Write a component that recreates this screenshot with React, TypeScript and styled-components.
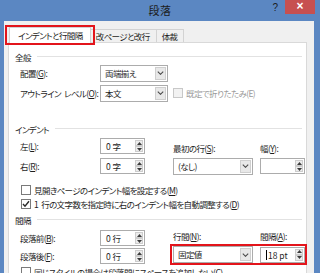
import styled, { createGlobalStyle } from "styled-components";

const GlobalStyle = createGlobalStyle`
  html, body { margin: 0; padding: 0; }
  body {
    width: 320px;
    height: 273px;
    overflow: hidden;
    font-family: "Noto Sans CJK JP", "Noto Sans", sans-serif;
    font-feature-settings: "palt";
    color: #1e1e1e;
  }
`;

function Chevron() {
  return (
    <svg width="7" height="4" viewBox="0 0 7 4">
      <path d="M0.8 0.6 L3.5 3.3 L6.2 0.6" fill="none" stroke="#4a4a4a" strokeWidth="1.1" />
    </svg>
  );
}

function Tri({ up }: { up?: boolean }) {
  return (
    <svg width="5" height="3" viewBox="0 0 5 3">
      <path d={up ? "M0 3 L2.5 0 L5 3 Z" : "M0 0 L2.5 3 L5 0 Z"} fill="#3c3c3c" />
    </svg>
  );
}

function Select({ value, width }: { value: string; width: number }) {
  return (
    <SelectBox $w={width}>
      <SelectText>{value}</SelectText>
      <ArrowBtn>
        <Chevron />
      </ArrowBtn>
    </SelectBox>
  );
}

function Spinner({ value, caret }: { value: string; caret?: boolean }) {
  return (
    <SpinBox>
      <SpinText>
        {caret && <Caret />}
        {value}
      </SpinText>
      <SpinBtns>
        <SpinBtn>
          <Tri up />
        </SpinBtn>
        <SpinBtn>
          <Tri />
        </SpinBtn>
      </SpinBtns>
    </SpinBox>
  );
}

function Check({ checked, disabled, children }: { checked?: boolean; disabled?: boolean; children: React.ReactNode }) {
  return (
    <>
      <Box $disabled={disabled}>
        {checked && (
          <svg width="8" height="8" viewBox="0 0 8 8">
            <path d="M1 4 L3 6.2 L7 1.2" fill="none" stroke="#2a2a2a" strokeWidth="1.4" />
          </svg>
        )}
      </Box>
      <CheckText $disabled={disabled}>{children}</CheckText>
    </>
  );
}

function App() {
  return (
    <>
      <GlobalStyle />
      <Window>
        <TitleBar>
          <span />
          <Title>段落</Title>
          <TitleButtons>
            <Help>?</Help>
            <Close>×</Close>
          </TitleButtons>
        </TitleBar>
        <Body>
          <Tabs>
            <Tab $active>インデントと行間隔</Tab>
            <Tab>改ページと改行</Tab>
            <Tab>体裁</Tab>
          </Tabs>
          <Panel>
            <Heading $top={7}>全般</Heading>
            <Row $h={20}>
              <Label>
                配置(<U>G</U>):
              </Label>
              <Select value="両端揃え" width={68} />
            </Row>
            <Row $h={20}>
              <Label>
                アウトライン<Sp />レベル(<U>O</U>):
              </Label>
              <Select value="本文" width={68} />
              <Gap />
              <Check disabled>既定で折りたたみ(E)</Check>
            </Row>

            <Heading $top={19}>インデント</Heading>
            <Block $top={1}>
              <LeftCol $w={158}>
                <Row $h={20}>
                  <Label>
                    左(<U>L</U>):
                  </Label>
                  <Spinner value="0 字" />
                </Row>
                <Row $h={20}>
                  <Label>
                    右(<U>R</U>):
                  </Label>
                  <Spinner value="0 字" />
                </Row>
              </LeftCol>
              <FieldCol $w={87}>
                <FieldLabel>
                  最初の行(<U>S</U>):
                </FieldLabel>
                <FieldControl>
                  <Select value="(なし)" width={80} />
                </FieldControl>
              </FieldCol>
              <FieldCol $w={43}>
                <FieldLabel>
                  幅(<U>Y</U>):
                </FieldLabel>
                <FieldControl>
                  <Spinner value="" />
                </FieldControl>
              </FieldCol>
            </Block>

            <CheckRow $top={7}>
              <Check>
                見開きページのインデント幅を設定する(<U>M</U>)
              </Check>
            </CheckRow>
            <CheckRow>
              <Check checked>
                1<Sp />行の文字数を指定時に右のインデント幅を自動調整する(<U>D</U>)
              </Check>
            </CheckRow>

            <Heading $top={2}>間隔</Heading>
            <Block $top={3}>
              <LeftCol $w={155}>
                <Row $h={18}>
                  <Label>
                    段落前(<U>B</U>):
                  </Label>
                  <Spinner value="0 行" />
                </Row>
                <Row $h={18}>
                  <Label>
                    段落後(<U>F</U>):
                  </Label>
                  <Spinner value="0 行" />
                </Row>
              </LeftCol>
              <RightCol>
                <LabelPair>
                  <PairLabel $w={87}>
                    行間(<U>N</U>):
                  </PairLabel>
                  <PairLabel>
                    間隔(<U>A</U>):
                  </PairLabel>
                </LabelPair>
                <Highlight>
                  <Select value="固定値" width={80} />
                  <Spinner value="18 pt" caret />
                </Highlight>
              </RightCol>
            </Block>
            <CheckRow>
              <Check>同じスタイルの場合は段落間にスペースを追加しない(C)</Check>
            </CheckRow>
          </Panel>
        </Body>
      </Window>
    </>
  );
}

export default App;

const TEXT = `
  font-size: 8.5px;
  letter-spacing: -0.6px;
  white-space: nowrap;
`;

const Window = styled.div`
  width: 320px;
  height: 273px;
  background: #5b87c2;
  display: flex;
  flex-direction: column;
  overflow: hidden;
`;

const TitleBar = styled.div`
  height: 21px;
  flex: none;
  display: grid;
  grid-template-columns: 1fr auto 1fr;
  align-items: start;
`;

const Title = styled.div`
  font-size: 11px;
  line-height: 21px;
  color: #1c1c1c;
  letter-spacing: 0.5px;
`;

const TitleButtons = styled.div`
  display: flex;
  justify-content: flex-end;
  align-items: flex-start;
  padding-right: 5px;
`;

const Help = styled.div`
  font-family: "Liberation Sans", sans-serif;
  font-size: 10px;
  line-height: 13px;
  margin-top: 1px;
  margin-right: 7px;
  color: #1c1c1c;
`;

const Close = styled.div`
  width: 30px;
  height: 14px;
  background: #c75050;
  color: #ffffff;
  font-family: "Liberation Sans", sans-serif;
  font-size: 12px;
  font-weight: bold;
  line-height: 13px;
  text-align: center;
`;

const Body = styled.div`
  flex: 1;
  margin: 0 6px 0 4px;
  background: #f0f0f0;
  padding: 6px 7px 0 4px;
  display: flex;
  flex-direction: column;
  min-height: 0;
`;

const Tabs = styled.div`
  display: flex;
  align-items: flex-start;
  padding-left: 1px;
  height: 16px;
  flex: none;
`;

const Tab = styled.div<{ $active?: boolean }>`
  position: relative;
  box-sizing: border-box;
  ${TEXT}
  padding: ${(p) => (p.$active ? "0 7px 0 8px" : "0 6px 0 5px")};
  border: 1px solid #d3d3d3;
  border-bottom: none;
  margin-left: ${(p) => (p.$active ? "0" : "-1px")};
  height: ${(p) => (p.$active ? "16px" : "13px")};
  margin-top: ${(p) => (p.$active ? "0" : "2px")};
  line-height: ${(p) => (p.$active ? "15px" : "12px")};
  background: ${(p) => (p.$active ? "#ffffff" : "#f0f0f0")};
  z-index: ${(p) => (p.$active ? 1 : 0)};

  ${(p) =>
    p.$active &&
    `
    &::after {
      content: "";
      position: absolute;
      left: -5px;
      right: -5px;
      top: -3px;
      bottom: -2px;
      border: 2px solid #e3141b;
    }
  `}
`;

const Panel = styled.div`
  flex: 1;
  margin-top: -1px;
  background: #ffffff;
  border: 1px solid #d9d9d9;
  border-bottom: none;
  padding: 0 4px 0 6px;
  min-height: 0;
`;

const Heading = styled.div<{ $top: number }>`
  display: flex;
  align-items: center;
  height: 13px;
  margin-top: ${(p) => p.$top}px;
  ${TEXT}

  &::after {
    content: "";
    flex: 1;
    height: 1px;
    background: #e2e2e2;
    margin-left: 6px;
  }
`;

const Row = styled.div<{ $h: number }>`
  display: flex;
  align-items: center;
  height: ${(p) => p.$h}px;
  padding-left: 5px;
  ${TEXT}
`;

const Label = styled.div`
  width: 80px;
  flex: none;
`;

const Sp = styled.span`
  display: inline-block;
  width: 3px;
`;

const U = styled.span`
  text-decoration: underline;
`;

const Gap = styled.div`
  width: 5px;
`;

const SelectBox = styled.div<{ $w: number }>`
  box-sizing: border-box;
  width: ${(p) => p.$w}px;
  height: 17px;
  border: 1px solid #acacac;
  background: #ffffff;
  display: flex;
  align-items: stretch;
  flex: none;
`;

const SelectText = styled.div`
  flex: 1;
  ${TEXT}
  line-height: 15px;
  padding-left: 4px;
`;

const ArrowBtn = styled.div`
  box-sizing: border-box;
  width: 11px;
  margin: 1px;
  background: #e8e8e8;
  border: 1px solid #cfcfcf;
  display: flex;
  align-items: center;
  justify-content: center;
`;

const SpinBox = styled.div`
  box-sizing: border-box;
  width: 45px;
  height: 16px;
  border: 1px solid #acacac;
  background: #ffffff;
  display: flex;
  flex: none;
`;

const SpinText = styled.div`
  flex: 1;
  display: flex;
  align-items: center;
  ${TEXT}
  letter-spacing: 0;
  padding-left: 5px;
`;

const Caret = styled.span`
  width: 1px;
  height: 10px;
  background: #000000;
  margin-right: 1px;
`;

const SpinBtns = styled.div`
  width: 8px;
  margin: 1px;
  display: flex;
  flex-direction: column;
`;

const SpinBtn = styled.div`
  flex: 1;
  box-sizing: border-box;
  background: #ececec;
  border: 1px solid #cdcdcd;
  display: flex;
  align-items: center;
  justify-content: center;
`;

const Box = styled.div<{ $disabled?: boolean }>`
  box-sizing: border-box;
  width: 10px;
  height: 10px;
  flex: none;
  border: 1px solid ${(p) => (p.$disabled ? "#c8c8c8" : "#7a7a7a")};
  background: ${(p) => (p.$disabled ? "#f2f2f2" : "#ffffff")};
  display: flex;
  align-items: center;
  justify-content: center;
`;

const CheckText = styled.span<{ $disabled?: boolean }>`
  margin-left: 3px;
  ${TEXT}
  color: ${(p) => (p.$disabled ? "#9a9a9a" : "#1e1e1e")};
`;

const Block = styled.div<{ $top: number }>`
  display: flex;
  margin-top: ${(p) => p.$top}px;
`;

const LeftCol = styled.div<{ $w: number }>`
  width: ${(p) => p.$w}px;
  flex: none;
`;

const FieldCol = styled.div<{ $w: number }>`
  width: ${(p) => p.$w}px;
  flex: none;
  display: flex;
  flex-direction: column;
`;

const FieldLabel = styled.div`
  height: 16px;
  margin-top: 4px;
  line-height: 16px;
  ${TEXT}
`;

const FieldControl = styled.div`
  height: 20px;
  display: flex;
  align-items: center;
`;

const CheckRow = styled.div<{ $top?: number }>`
  display: flex;
  align-items: center;
  height: 14px;
  padding-left: 6px;
  margin-top: ${(p) => p.$top ?? 0}px;
`;

const RightCol = styled.div`
  width: 137px;
  flex: none;
  display: flex;
  flex-direction: column;
`;

const LabelPair = styled.div`
  display: flex;
  height: 14px;
  line-height: 14px;
  padding-left: 3px;
  ${TEXT}
`;

const PairLabel = styled.div<{ $w?: number }>`
  width: ${(p) => (p.$w ? `${p.$w}px` : "auto")};
`;

const Highlight = styled.div`
  margin-top: 1px;
  border: 2px solid #e3141b;
  padding: 0 2px 0 1px;
  height: 21px;
  box-sizing: border-box;
  display: flex;
  align-items: center;
  gap: 7px;
`;
